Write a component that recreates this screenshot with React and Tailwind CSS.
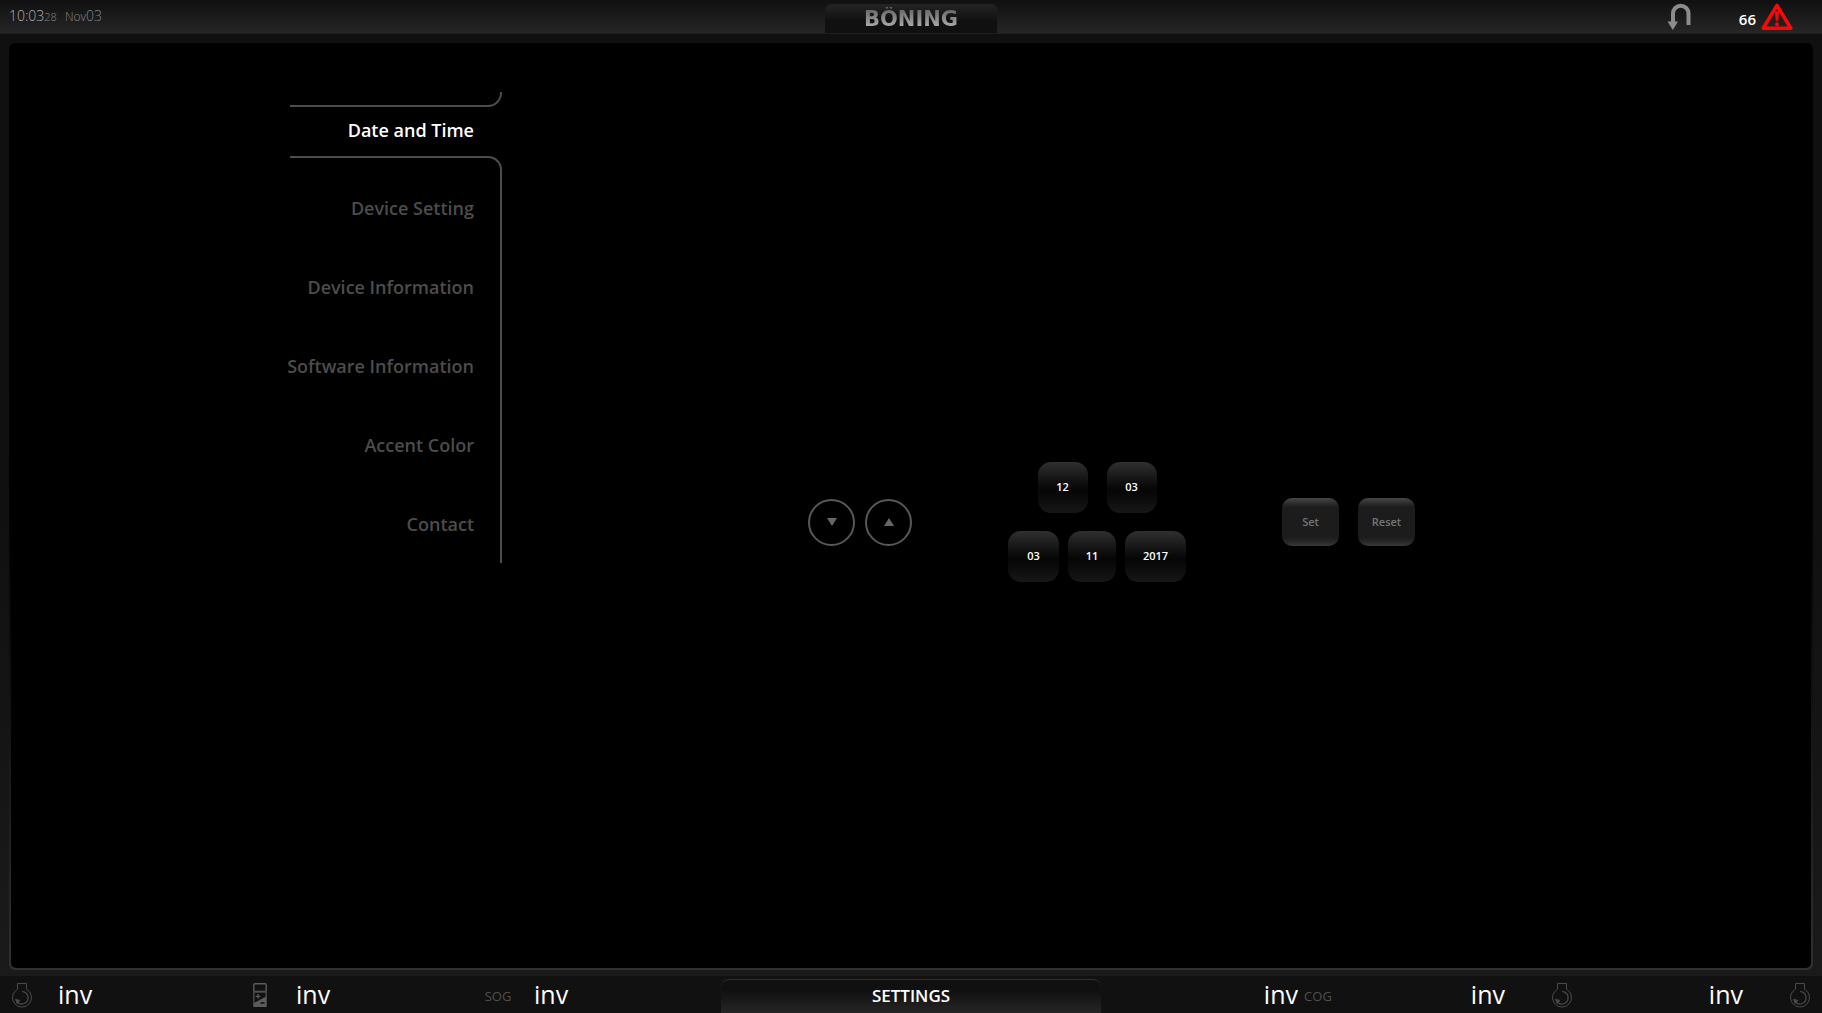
const MENU = [
  'Device Setting',
  'Device Information',
  'Software Information',
  'Accent Color',
  'Contact',
];

function EngineIcon() {
  return (
    <svg width="22" height="26" viewBox="0 0 22 26" fill="none" stroke="#4b4b4b" aria-hidden="true">
      <path d="M6.5 7.2V1.5h9v5.7a9.5 9.5 0 1 1-9 0z" />
      <path d="M11 9.5a6.3 6.3 0 1 1-4.5 10.8" strokeWidth="1.2" />
      <path d="M4.6 17.4l4.2 1-2.6 3z" fill="#4b4b4b" />
    </svg>
  );
}

function BatteryIcon() {
  return (
    <svg width="14" height="26" viewBox="0 0 14 26" aria-hidden="true">
      <rect x="0.8" y="1.8" width="12.4" height="7.6" rx="1" fill="none" stroke="#5c5c5c" strokeWidth="1.4" />
      <rect x="0.8" y="10" width="12.4" height="14.2" fill="none" stroke="#4c4c4c" strokeWidth="1.4" />
      <path d="M1 21L13 14.500V25H1z" fill="#5c5c5c" />
      <path d="M5 12v4.600M2.700 14.300h4.600" stroke="#5c5c5c" strokeWidth="1.3" />
      <path d="M7.5 21h4" stroke="#111" strokeWidth="1.5" />
    </svg>
  );
}

function FieldButton({ label, value, className }) {
  return (
    <button
      type="button"
      aria-label={label}
      className={`h-[51px] rounded-[13px] bg-linear-to-b from-[#303030] via-[#060606] via-55% to-[#171717] text-[11px] font-semibold text-white ${className}`}
    >
      {value}
    </button>
  );
}

function ActionButton({ children }) {
  return (
    <button
      type="button"
      className="h-12 w-[57px] rounded-[10px] bg-[linear-gradient(#474747,#262626_14%,#1c1c1c_20%,#1c1c1c_82%,#262626_90%,#383838)] text-[11px] font-semibold text-[#757575]"
    >
      {children}
    </button>
  );
}

function RoundButton({ label, points }) {
  return (
    <button
      type="button"
      aria-label={label}
      className="flex size-[47px] items-center justify-center rounded-full border-2 border-[#575757]"
    >
      <svg width="10" height="10" viewBox="0 0 10 10" fill="#666" aria-hidden="true">
        <polygon points={points} />
      </svg>
    </button>
  );
}

function Reading({ label }) {
  return (
    <div className="flex items-center gap-4">
      <span className="flex w-10 justify-center text-[13px] text-[#4f4f4f]">{label}</span>
      <span className="text-[25px] text-white">inv</span>
    </div>
  );
}

function ReadingRight({ label, className }) {
  return (
    <div className={`flex items-center justify-end ${className}`}>
      <span className="text-[25px] text-white">inv</span>
      <span className="flex w-10 justify-center text-[13px] text-[#4f4f4f]">{label}</span>
    </div>
  );
}

export default function App() {
  return (
    <div className="flex min-h-screen flex-col bg-linear-to-b from-[#101010] from-50% to-[#1b1b1b] font-['Open_Sans','Noto_Sans',sans-serif]">
      <header className="grid h-[34px] grid-cols-[1fr_172px_1fr] border-b border-[#1d1d1d] bg-linear-to-b from-[#101010] to-[#262626]">
        <div className="flex items-baseline pt-[6px] pl-[9px] font-light text-[#858585]">
          <time className="text-sm text-[#b0b0b0]">10:03</time>
          <span className="text-[11px]">28</span>
          <span className="ml-2 text-xs">Nov</span>
          <span className="text-sm">03</span>
        </div>
        <div className="mt-1 flex items-center justify-center rounded-t-md bg-linear-to-b from-[#242424] to-[#101010] to-60%">
          <span className="bg-linear-to-b from-[#606060] to-[#bcbcbc] bg-clip-text font-['DejaVu_Sans',sans-serif] text-[21px] leading-6 font-bold text-transparent">
            BÖNING
          </span>
        </div>
        <div className="flex items-center justify-end pr-7">
          <button type="button" aria-label="Back" className="mr-[46px] pb-[2px]">
            <svg width="26" height="28" viewBox="0 0 26 28" fill="none" aria-hidden="true">
              <path d="M6 20V11.500a7.500 7.500 0 0 1 15.500 0V23" stroke="#8c8c8c" strokeWidth="4" />
              <path d="M0.500 19.500h10.500L5.800 28z" fill="#8c8c8c" />
            </svg>
          </button>
          <span className="mr-1 pt-[5px] text-[15px] font-semibold text-white">66</span>
          <svg width="34" height="29" viewBox="0 0 34 29" fill="none" stroke="#f80808" role="img" aria-label="Alarm">
            <path d="M17 3.500L30.800 26.200H3.200z" strokeWidth="3.600" strokeLinejoin="round" />
            <path d="M15.200 9.500h3.600l-1 9.300h-1.600z" fill="#f80808" strokeWidth="0.800" />
            <circle cx="17" cy="22.300" r="1.600" fill="#f80808" strokeWidth="0.800" />
          </svg>
        </div>
      </header>

      <div className="mx-[9px] mt-[9px] mb-[6px] flex flex-1 rounded-md bg-linear-to-b from-black from-30% to-[#303030] p-[2px]">
        <main className="flex flex-1 items-start rounded-[5px] bg-black pt-[47px]">
          <nav aria-label="Settings" className="ml-[279px] w-[212px] shrink-0 text-lg font-semibold text-[#4c4c4c]">
            <div className="h-[15px] rounded-br-[14px] border-r-2 border-b-2 border-[#4c4c4c]" />
            <button
              type="button"
              aria-current="page"
              className="flex h-[49px] w-full items-center justify-end pr-7 pb-[3px] text-white"
            >
              Date and Time
            </button>
            <div className="rounded-tr-[14px] border-t-2 border-r-2 border-[#4c4c4c] pt-[10px]">
              {MENU.map((item) => (
                <button
                  key={item}
                  type="button"
                  className="flex h-[79px] w-full items-center justify-end pr-[26px] whitespace-nowrap"
                >
                  {item}
                </button>
              ))}
            </div>
          </nav>

          <section aria-label="Date and Time" className="flex flex-1 items-center justify-center gap-24 self-stretch pr-[90px] pb-4">
            <div className="flex gap-[10px]">
              <RoundButton label="Decrease" points="0,1 10,1 5,9" />
              <RoundButton label="Increase" points="0,9 10,9 5,1" />
            </div>
            <div className="flex flex-col items-center gap-[18px]">
              <div className="flex gap-[19px]">
                <FieldButton label="Hour" value="12" className="w-[50px]" />
                <FieldButton label="Minute" value="03" className="w-[50px]" />
              </div>
              <div className="flex gap-[9px]">
                <FieldButton label="Day" value="03" className="w-[51px]" />
                <FieldButton label="Month" value="11" className="w-12" />
                <FieldButton label="Year" value="2017" className="w-[61px]" />
              </div>
            </div>
            <div className="flex gap-[19px]">
              <ActionButton>Set</ActionButton>
              <ActionButton>Reset</ActionButton>
            </div>
          </section>
        </main>
      </div>

      <footer className="grid h-[37px] grid-cols-[1fr_380px_1fr] bg-[#111]">
        <div className="grid grid-cols-3 pr-[5px] pl-[2px]">
          <Reading label={<EngineIcon />} />
          <Reading label={<BatteryIcon />} />
          <Reading label={<span className="pt-1">SOG</span>} />
        </div>
        <h1 className="mt-[3px] flex items-center justify-center rounded-t-lg border-t border-[#303030] bg-linear-to-b from-[#101010] from-30% to-[#272727] pb-[2px] text-[17px] font-semibold text-white">
          SETTINGS
        </h1>
        <div className="grid grid-cols-3 pr-[2px] pl-[5px]">
          <ReadingRight label={<span className="pt-1">COG</span>} className="pr-[6px]" />
          <ReadingRight label={<EngineIcon />} className="gap-[37px]" />
          <ReadingRight label={<EngineIcon />} className="gap-[37px]" />
        </div>
      </footer>
    </div>
  );
}
